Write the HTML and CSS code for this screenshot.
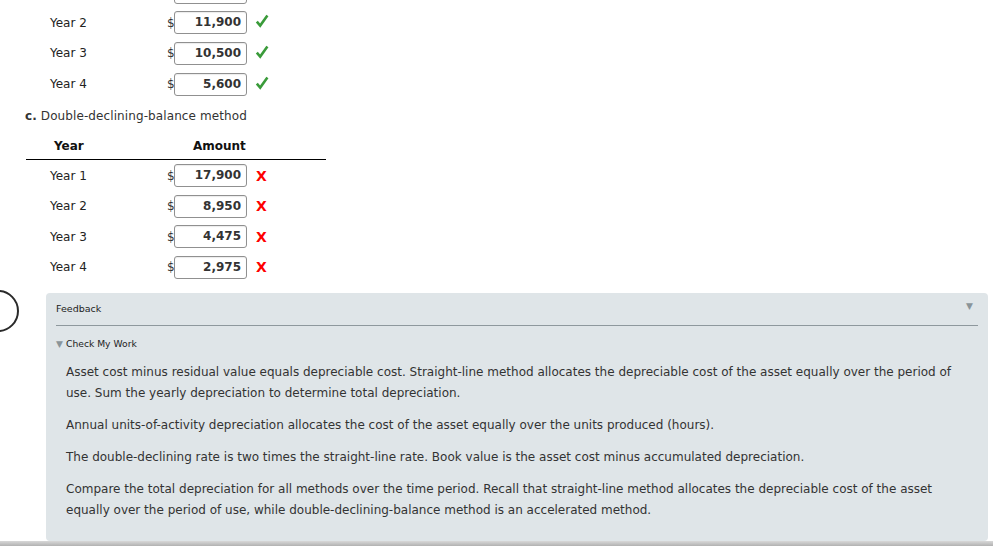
FILE: index.html
```html
<!DOCTYPE html>
<html>
<head>
<meta charset="utf-8">
<link rel="stylesheet" href="styles.css">
</head>
<body>
<div class="page">
  <div class="rows top-rows">
    <div class="row"><span class="label">Year 1</span><span class="dollar">$</span><span class="field">15,900</span><span class="mark"></span></div>
    <div class="row"><span class="label">Year 2</span><span class="dollar">$</span><span class="field">11,900</span><span class="mark"><svg class="check" viewBox="0 0 14 14" width="14" height="14"><path d="M1.8 7.6 L5.2 11.6 L12.4 1.6" fill="none" stroke="#3a9b3a" stroke-width="2.6"/></svg></span></div>
    <div class="row"><span class="label">Year 3</span><span class="dollar">$</span><span class="field">10,500</span><span class="mark"><svg class="check" viewBox="0 0 14 14" width="14" height="14"><path d="M1.8 7.6 L5.2 11.6 L12.4 1.6" fill="none" stroke="#3a9b3a" stroke-width="2.6"/></svg></span></div>
    <div class="row"><span class="label">Year 4</span><span class="dollar">$</span><span class="field">5,600</span><span class="mark"><svg class="check" viewBox="0 0 14 14" width="14" height="14"><path d="M1.8 7.6 L5.2 11.6 L12.4 1.6" fill="none" stroke="#3a9b3a" stroke-width="2.6"/></svg></span></div>
  </div>

  <div class="part-title"><b>c.</b> Double-declining-balance method</div>

  <div class="table">
    <div class="thead"><span class="th-year">Year</span><span class="th-amount">Amount</span></div>
    <div class="rows">
      <div class="row"><span class="label">Year 1</span><span class="dollar">$</span><span class="field">17,900</span><span class="mark x">X</span></div>
      <div class="row"><span class="label">Year 2</span><span class="dollar">$</span><span class="field">8,950</span><span class="mark x">X</span></div>
      <div class="row"><span class="label">Year 3</span><span class="dollar">$</span><span class="field">4,475</span><span class="mark x">X</span></div>
      <div class="row"><span class="label">Year 4</span><span class="dollar">$</span><span class="field">2,975</span><span class="mark x">X</span></div>
    </div>
  </div>

  <div class="feedback-wrap">
    <div class="circle"></div>
    <div class="feedback">
      <div class="fb-head"><span>Feedback</span><span class="fb-toggle">&#9660;</span></div>
      <div class="cmw"><span class="cmw-tri">&#9660;</span>Check My Work</div>
      <div class="fb-body">
        <p>Asset cost minus residual value equals depreciable cost. Straight-line method allocates the depreciable cost of the asset equally over the period of use. Sum the yearly depreciation to determine total depreciation.</p>
        <p>Annual units-of-activity depreciation allocates the cost of the asset equally over the units produced (hours).</p>
        <p>The double-declining rate is two times the straight-line rate. Book value is the asset cost minus accumulated depreciation.</p>
        <p>Compare the total depreciation for all methods over the time period. Recall that straight-line method allocates the depreciable cost of the asset equally over the period of use, while double-declining-balance method is an accelerated method.</p>
      </div>
    </div>
  </div>
  <div class="bottom-bar"></div>
</div>
</body>
</html>
```

FILE: styles.css
```css
html, body {
  margin: 0;
  padding: 0;
  background: #fff;
  overflow: hidden;
}
body {
  font-family: "DejaVu Sans", Verdana, sans-serif;
  color: #333;
  font-size: 12px;
  width: 993px;
  height: 546px;
}
.page {
  display: flex;
  flex-direction: column;
}
.rows {
  display: flex;
  flex-direction: column;
}
.top-rows {
  margin-top: -23px;
}
.row {
  display: flex;
  align-items: center;
  height: 30.6px;
  padding-left: 50px;
}
.label {
  width: 117px;
  color: #222;
}
.dollar {
  width: 7px;
  color: #333;
}
.field {
  box-sizing: border-box;
  width: 73px;
  height: 23px;
  border: 1px solid #909090;
  border-radius: 3px;
  box-shadow: inset 0 1px 1px rgba(0,0,0,0.08);
  text-align: right;
  font-weight: bold;
  color: #333;
  line-height: 21px;
  padding-right: 5px;
  background: #fff;
}
.mark {
  margin-left: 8px;
  display: flex;
  align-items: center;
}
.check {
  display: block;
  margin-top: -3px;
}
.x {
  color: #f00;
  font-weight: bold;
  font-size: 14px;
  margin-left: 9px;
}
.part-title {
  margin-top: 2px;
  padding-left: 25px;
  height: 30px;
  line-height: 30px;
  color: #333;
  letter-spacing: 0.1px;
}
.part-title b {
  color: #333;
  font-weight: bold;
}
.table {
  margin-left: 26px;
  width: 300px;
}
.thead {
  display: flex;
  align-items: center;
  height: 26px;
  padding-top: 2px;
  border-bottom: 1px solid #000;
  font-weight: bold;
  color: #111;
}
.th-year {
  margin-left: 28px;
  width: 139px;
}
.th-amount {
  width: 52px;
}
.table .row {
  padding-left: 24px;
}
.table .rows {
  padding-top: 0;
}
.feedback-wrap {
  position: relative;
  margin-top: 10px;
  padding-left: 46px;
  padding-right: 5px;
}
.circle {
  position: absolute;
  left: -23px;
  top: -3px;
  width: 38px;
  height: 38px;
  border: 2px solid #2a2a2a;
  border-radius: 50%;
}
.feedback {
  background: #dfe5e8;
  border-radius: 4px;
  padding: 0 10px 20px 10px;
}
.fb-head {
  display: flex;
  justify-content: space-between;
  align-items: center;
  height: 32px;
  border-bottom: 1px solid #8e989d;
  font-size: 9.5px;
  color: #222;
}
.fb-toggle {
  color: #8a9499;
  font-size: 9px;
  margin-right: 5px;
  margin-top: -6px;
}
.cmw {
  margin-top: 11px;
  font-size: 9.2px;
  color: #222;
  height: 14px;
  line-height: 14px;
  display: flex;
  align-items: center;
}
.cmw-tri {
  color: #8a9499;
  font-size: 9px;
  width: 10px;
}
.fb-body {
  padding-left: 10px;
  margin-top: 11px;
}
.fb-body p {
  margin: 0 0 11px 0;
  font-size: 12px;
  line-height: 21px;
  color: #333;
}
.fb-body p:last-child {
  margin-bottom: 0;
}
.bottom-bar {
  height: 6px;
  background: linear-gradient(#d8d8d8, #aaaaaa);
}
```
